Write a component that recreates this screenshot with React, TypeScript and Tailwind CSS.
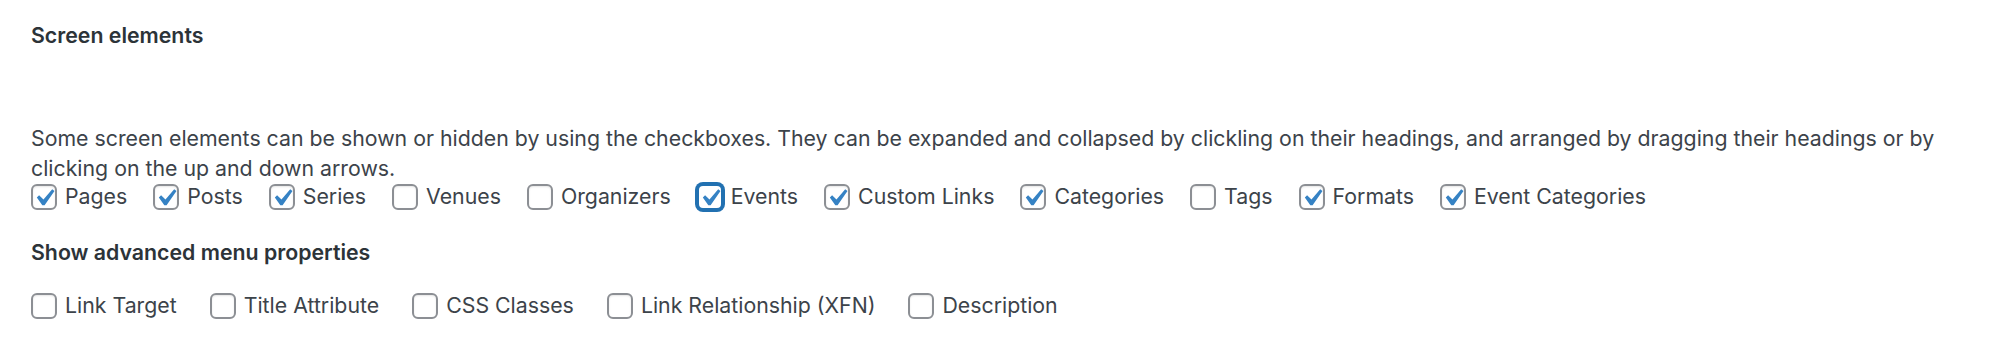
import React from 'react';

const CHECK_PATH = 'M14.83 4.89l1.34.94-5.81 8.38H9.02L5.78 9.67l1.34-1.25 2.57 2.4z';

interface Option {
  label: string;
  checked?: boolean;
  focused?: boolean;
}

const screenElements: Option[] = [
  { label: 'Pages', checked: true },
  { label: 'Posts', checked: true },
  { label: 'Series', checked: true },
  { label: 'Venues' },
  { label: 'Organizers' },
  { label: 'Events', checked: true, focused: true },
  { label: 'Custom Links', checked: true },
  { label: 'Categories', checked: true },
  { label: 'Tags' },
  { label: 'Formats', checked: true },
  { label: 'Event Categories', checked: true },
];

const advanced: Option[] = [
  { label: 'Link Target' },
  { label: 'Title Attribute' },
  { label: 'CSS Classes' },
  { label: 'Link Relationship (XFN)' },
  { label: 'Description' },
];

const CheckBox: React.FC<{ checked?: boolean; focused?: boolean }> = ({ checked, focused }) => (
  <span
    className={`relative inline-block h-[26px] w-[26px] shrink-0 rounded-[6px] border-2 bg-white ${
      focused
        ? 'border-[#2271b1] shadow-[0_0_0_2px_#2271b1]'
        : 'border-[#8c8f94] shadow-[inset_0_1px_2px_rgba(0,0,0,0.1)]'
    }`}
  >
    {checked && (
      <svg viewBox="0 0 20 20" className="absolute left-[-6px] top-[-5px] h-[34px] w-[34px]">
        <path d={CHECK_PATH} fill="#3582c4" />
      </svg>
    )}
  </span>
);

const OptionRow: React.FC<{ options: Option[]; spacing: string }> = ({ options, spacing }) => (
  <div className={`flex flex-wrap items-center ${spacing}`}>
    {options.map((o) => (
      <label key={o.label} className="flex items-center gap-[8px] leading-[31px]">
        <CheckBox checked={o.checked} focused={o.focused} />
        <span>{o.label}</span>
      </label>
    ))}
  </div>
);

export default function App() {
  return (
    <div
      className="h-[345px] w-full bg-white pl-[31px] pr-[31px] pt-[20px] text-[21.3px] text-[#3c434a]"
      style={{ fontFamily: 'Inter, "Liberation Sans", sans-serif' }}
    >
      {/* Screen elements */}
      <h2 className="font-semibold leading-[31px] text-[#2c3338]">Screen elements</h2>
      <p className="mt-[72px] leading-[30px]">
        Some screen elements can be shown or hidden by using the checkboxes. They can be expanded and collapsed by
        clickling on their headings, and arranged by dragging their headings or by clicking on the up and down arrows.
      </p>
      <div className="-mt-[2px]">
        <OptionRow options={screenElements} spacing="gap-x-[26px]" />
      </div>

      {/* Advanced menu properties */}
      <h2 className="mt-[25px] font-semibold leading-[31px] text-[#2c3338]">Show advanced menu properties</h2>
      <div className="mt-[22px]">
        <OptionRow options={advanced} spacing="gap-x-[33px]" />
      </div>
    </div>
  );
}
